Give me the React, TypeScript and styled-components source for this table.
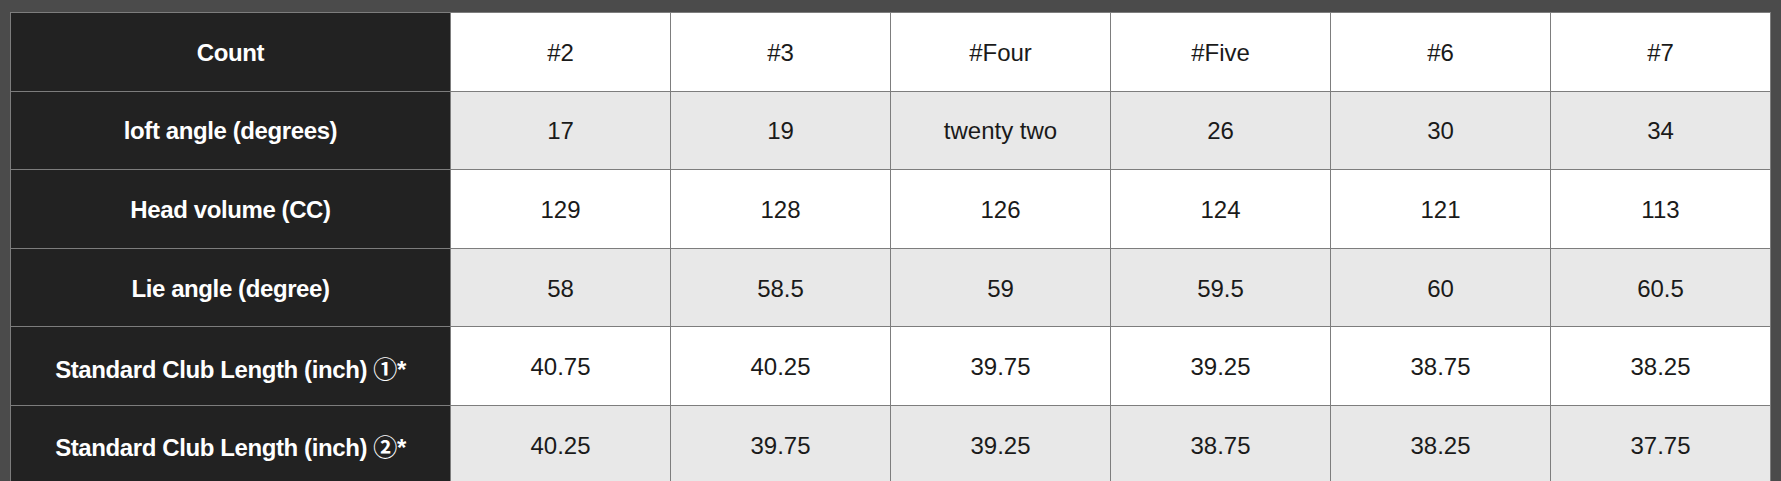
import React from "react";
import styled, { createGlobalStyle } from "styled-components";

const GlobalStyle = createGlobalStyle`
  html, body {
    margin: 0;
    padding: 0;
    background: #4b4b4b;
  }
`;

const Page = styled.div`
  padding: 12px 10px 0 10px;
  background: #4b4b4b;
  min-height: 481px;
  box-sizing: border-box;
`;

const Table = styled.table`
  border-collapse: collapse;
  table-layout: fixed;
  width: 1761px;
  font-family: "Liberation Sans", Arial, "Noto Sans CJK JP", sans-serif;
`;

const Row = styled.tr<{ $alt: boolean }>`
  height: 78.6px;
  background: ${(p) => (p.$alt ? "#e8e8e8" : "#ffffff")};
`;

const HeadCell = styled.th`
  background: #222222;
  color: #ffffff;
  font-size: 24px;
  font-weight: 700;
  letter-spacing: -0.4px;
  text-align: center;
  vertical-align: middle;
  border: 1px solid #7d7d7d;
  padding: 2px 0 0 0;
`;

const DataCell = styled.td`
  color: #1a1a1a;
  font-size: 24px;
  font-weight: 400;
  text-align: center;
  vertical-align: middle;
  border: 1px solid #7d7d7d;
  padding: 2px 0 0 0;
`;

const rows: { label: string; values: string[] }[] = [
  { label: "Count", values: ["#2", "#3", "#Four", "#Five", "#6", "#7"] },
  { label: "loft angle (degrees)", values: ["17", "19", "twenty two", "26", "30", "34"] },
  { label: "Head volume (CC)", values: ["129", "128", "126", "124", "121", "113"] },
  { label: "Lie angle (degree)", values: ["58", "58.5", "59", "59.5", "60", "60.5"] },
  {
    label: "Standard Club Length (inch) ①*",
    values: ["40.75", "40.25", "39.75", "39.25", "38.75", "38.25"],
  },
  {
    label: "Standard Club Length (inch) ②*",
    values: ["40.25", "39.75", "39.25", "38.75", "38.25", "37.75"],
  },
];

export default function App() {
  return (
    <>
      <GlobalStyle />
      <Page>
        <Table>
          <colgroup>
            <col style={{ width: 440 }} />
            {rows[0].values.map((_, i) => (
              <col key={i} style={{ width: 220 }} />
            ))}
          </colgroup>
          <tbody>
            {rows.map((r, ri) => (
              <Row key={ri} $alt={ri % 2 === 1}>
                <HeadCell scope="row">{r.label}</HeadCell>
                {r.values.map((v, vi) => (
                  <DataCell key={vi}>{v}</DataCell>
                ))}
              </Row>
            ))}
          </tbody>
        </Table>
      </Page>
    </>
  );
}
